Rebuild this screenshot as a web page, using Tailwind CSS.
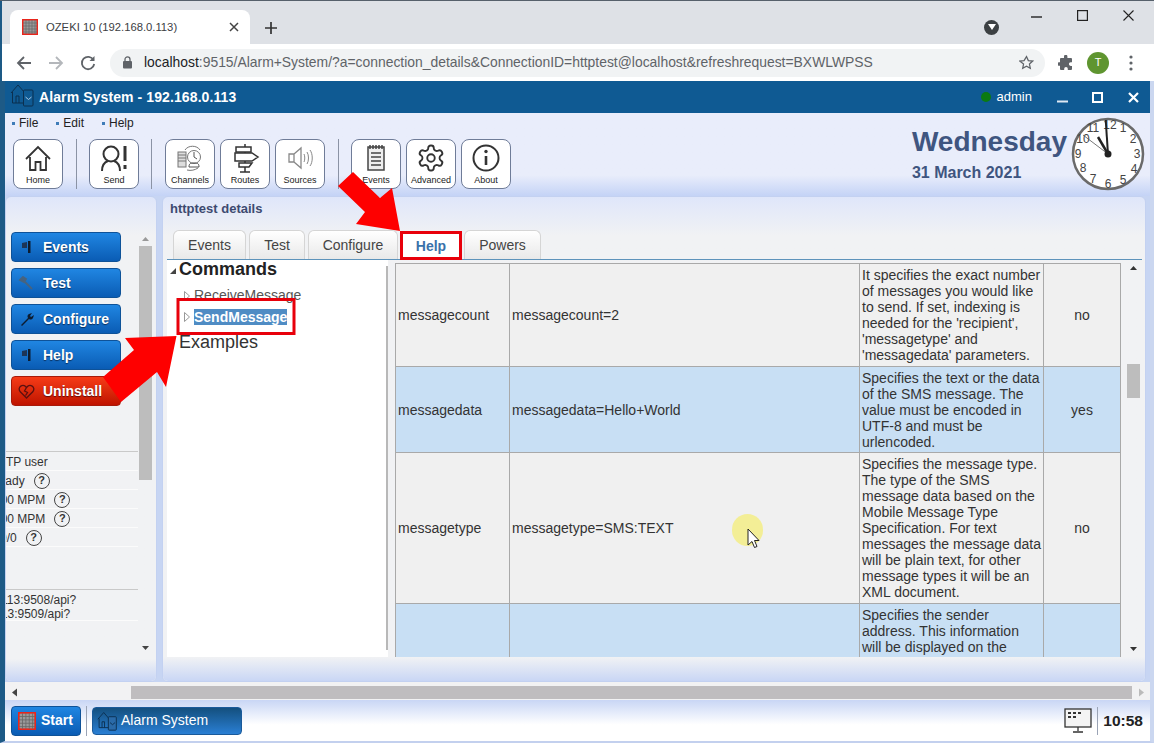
<!DOCTYPE html>
<html lang="en">
<head>
<meta charset="UTF-8">
<title>Alarm System</title>
<script src="https://cdn.jsdelivr.net/npm/@tailwindcss/browser@4"></script>
</head>
<body class="bg-white">
<div class="relative w-[1154px] h-[743px] overflow-hidden flex flex-col font-['Liberation_Sans',Arial,sans-serif] text-[#333]">

  <!-- browser chrome -->
  <div class="h-[1px] bg-[#56606b] shrink-0"></div>
  <div class="h-[43px] shrink-0 bg-[#dee1e6] border-l-2 border-[#1d5a86] flex items-end pl-[8px] relative">
    <div class="w-[240px] h-[34px] bg-white rounded-t-lg flex items-center pl-[12px] pr-[11px]">
      <svg class="w-[16px] h-[16px] shrink-0" viewBox="0 0 16 16"><rect x="0.75" y="0.75" width="14.5" height="14.5" fill="#9a9a9a" stroke="#e8261c" stroke-width="1.5"/><path d="M4 1v14M7 1v14M10 1v14M13 1v14M1 4h14M1 7h14M1 10h14M1 13h14" stroke="#666" stroke-width="0.7"/></svg>
      <span class="ml-[8px] text-[11.25px] text-[#3c4043] whitespace-nowrap">OZEKI 10 (192.168.0.113)</span>
      <svg class="ml-auto w-[10px] h-[10px]" viewBox="0 0 10 10"><path d="M1 1l8 8M9 1l-8 8" stroke="#444" stroke-width="1.5"/></svg>
    </div>
    <svg class="ml-[15px] mb-[10px] w-[12px] h-[12px]" viewBox="0 0 12 12"><path d="M6 0v12M0 6h12" stroke="#333" stroke-width="1.7"/></svg>
    <div class="ml-auto flex items-center h-full pr-[20px] text-[#222]">
      <div class="w-[15px] h-[15px] rounded-full bg-[#3c4043] flex items-center justify-center mt-[9px] mr-[32px]">
        <svg class="w-[8px] h-[6px]" viewBox="0 0 8 6"><path d="M0 0h8L4 6z" fill="#fff"/></svg>
      </div>
      <svg class="w-[11px] h-[2px] mb-[11px] mr-[35px]" viewBox="0 0 11 2"><path d="M0 1h11" stroke="#222" stroke-width="1.4"/></svg>
      <svg class="w-[11px] h-[11px] mb-[15px] mr-[35px]" viewBox="0 0 11 11"><rect x="0.6" y="0.6" width="9.8" height="9.8" fill="none" stroke="#222" stroke-width="1.2"/></svg>
      <svg class="w-[11px] h-[11px] mb-[15px]" viewBox="0 0 11 11"><path d="M0.5 0.5l10 10M10.5 0.5l-10 10" stroke="#222" stroke-width="1.1"/></svg>
    </div>
  </div>
  <div class="h-[37px] shrink-0 bg-white border-l-2 border-[#1d5a86] flex items-center pl-[14px] pr-[18px]">
    <svg class="w-[16px] h-[16px]" viewBox="0 0 16 16"><path d="M15 8H2M8 2L2 8l6 6" fill="none" stroke="#5f6368" stroke-width="1.8"/></svg>
    <svg class="ml-[16px] w-[16px] h-[16px]" viewBox="0 0 16 16"><path d="M1 8h13M8 2l6 6-6 6" fill="none" stroke="#b4b7bb" stroke-width="1.8"/></svg>
    <svg class="ml-[16px] w-[16px] h-[16px]" viewBox="0 0 16 16"><path d="M13.5 5A6.2 6.2 0 1 0 14.2 9" fill="none" stroke="#5f6368" stroke-width="1.8"/><path d="M14.5 1v5h-5z" fill="#5f6368"/></svg>
    <div class="ml-[14px] w-[935px] h-[28px] rounded-full bg-[#f1f3f4] flex items-center pl-[12px] pr-[11px]">
      <svg class="w-[11px] h-[13px] shrink-0" viewBox="0 0 11 13"><rect x="1" y="5" width="9" height="7.5" rx="1" fill="#5f6368"/><path d="M3 5V3.4a2.5 2.5 0 0 1 5 0V5" fill="none" stroke="#5f6368" stroke-width="1.3"/></svg>
      <span class="ml-[11px] text-[13.9px] text-[#5f6368] whitespace-nowrap"><span class="text-[#202124]">localhost</span>:9515/Alarm+System/?a=connection_details&amp;ConnectionID=httptest@localhost&amp;refreshrequest=BXWLWPSS</span>
      <svg class="ml-auto w-[15px] h-[15px] shrink-0" viewBox="0 0 24 24"><path d="M12 2.5l2.9 6.4 7 .8-5.2 4.7 1.4 6.9-6.1-3.5-6.1 3.5 1.4-6.9L1.100 9.700l7-.8z" fill="none" stroke="#5f6368" stroke-width="2"/></svg>
    </div>
    <svg class="ml-[13px] w-[16px] h-[16px]" viewBox="0 0 16 16"><path d="M6 1.500a1.700 1.700 0 0 1 3.400 0V3H13a1 1 0 0 1 1 1v3.300h-1.300a1.800 1.800 0 0 0 0 3.600H14V14a1 1 0 0 1-1 1H9.800v-1.300a1.800 1.800 0 0 0-3.600 0V15H3a1 1 0 0 1-1-1v-3.200H1a1.800 1.800 0 0 1 0-3.600h1V4a1 1 0 0 1 1-1h3z" fill="#5f6368"/></svg>
    <div class="ml-[13px] w-[22px] h-[22px] rounded-full bg-[#5f9530] text-white text-[11px] flex items-center justify-center">T</div>
    <svg class="ml-[20px] w-[4px] h-[16px]" viewBox="0 0 4 16"><circle cx="2" cy="2" r="1.600" fill="#5f6368"/><circle cx="2" cy="8" r="1.600" fill="#5f6368"/><circle cx="2" cy="14" r="1.600" fill="#5f6368"/></svg>
  </div>

  <!-- app window -->
  <div class="flex-1 min-h-0 flex flex-col border-l-[5px] border-l-[#1d5a86] border-r-[4px] border-r-[#cbd7f0] border-b-2 border-b-[#c3d0ee]">

    <!-- title bar -->
    <div class="h-[32px] shrink-0 bg-[#0f5a93] flex items-center text-white">
      <svg class="ml-[5px] w-[25px] h-[25px] shrink-0 mb-[5px]" viewBox="0 0 25 25" fill="none" stroke="#0b2f4f" stroke-width="1"><path d="M1 11L8 3l7 8M2.500 10v11H14"/><path d="M6 21v-7h3v7"/><rect x="13.500" y="8" width="9.500" height="16" rx="1" fill="#0f5a93"/><path d="M15.500 15l3 2.500 3-2.500" stroke="#a8c6e0"/></svg>
      <span class="ml-[4px] text-[14px] font-bold whitespace-nowrap tracking-[0.1px]">Alarm System - 192.168.0.113</span>
      <span class="ml-auto w-[10px] h-[10px] rounded-full bg-[#0b7a12]"></span>
      <span class="ml-[6px] text-[13px]">admin</span>
      <svg class="ml-[25px] w-[11px] h-[11px]" viewBox="0 0 11 11"><path d="M0 9.500h11" stroke="#dfe9f3" stroke-width="2"/></svg>
      <svg class="ml-[24px] w-[11px] h-[11px]" viewBox="0 0 11 11"><rect x="1" y="1" width="9" height="9" fill="none" stroke="#fff" stroke-width="2"/></svg>
      <svg class="ml-[25px] mr-[11px] w-[11px] h-[11px]" viewBox="0 0 11 11"><path d="M1 1l9 9M10 1l-9 9" stroke="#fff" stroke-width="2.200"/></svg>
    </div>

    <!-- menu and toolbar -->
    <div class="h-[83px] shrink-0 bg-gradient-to-b from-[#e9edfb] from-75% to-[#c4d3f6] flex justify-between">
      <div class="flex flex-col">
        <div class="h-[20px] flex items-center text-[12px] text-[#222] pl-[7px]">
          <span class="w-[3px] h-[3px] bg-[#3f7cb8]"></span><span class="ml-[4px]">File</span>
          <span class="ml-[18px] w-[3px] h-[3px] bg-[#3f7cb8]"></span><span class="ml-[4px]">Edit</span>
          <span class="ml-[18px] w-[3px] h-[3px] bg-[#3f7cb8]"></span><span class="ml-[4px]">Help</span>
        </div>
        <div class="mt-[6px] pl-[8px] flex items-center">
          <div class="w-[50px] h-[50px] bg-white border border-[#6f7c98] rounded-lg flex flex-col items-center justify-between pt-[3px] pb-[1px] text-[9px] text-[#222]">
            <svg class="w-[30px] h-[30px]" viewBox="0 0 30 30" fill="none" stroke="#333" stroke-width="1.800"><path d="M3 16L15 4l12 12M7 14v13h5.500v-8h5v8H23V14"/></svg>Home</div>
          <div class="ml-[13px] w-px h-[50px] bg-[#8b93a5]"></div>
          <div class="ml-[12px] w-[50px] h-[50px] bg-white border border-[#6f7c98] rounded-lg flex flex-col items-center justify-between pt-[3px] pb-[1px] text-[9px] text-[#222]">
            <svg class="w-[30px] h-[30px]" viewBox="0 0 30 30" fill="none" stroke="#333" stroke-width="2"><circle cx="12" cy="11" r="7.500"/><path d="M3 28c0-6 3-9 6-10M21 28c0-6-3-9-6-10"/><path d="M26 3v15M26 22v4" stroke-width="3"/></svg>Send</div>
          <div class="ml-[12px] w-px h-[50px] bg-[#8b93a5]"></div>
          <div class="ml-[13px] w-[50px] h-[50px] bg-white border border-[#6f7c98] rounded-lg flex flex-col items-center justify-between pt-[3px] pb-[1px] text-[9px] text-[#222]">
            <svg class="w-[30px] h-[30px]" viewBox="0 0 30 30" fill="none" stroke="#777" stroke-width="1"><rect x="3" y="9" width="8" height="15" fill="#ddd"/><path d="M3 12h8M3 15h8M3 18h8"/><path d="M10 7c3-5 12-5 15 0M12 27c4 1 8 0 11-2"/><circle cx="19" cy="14" r="6.500" fill="#fff"/><path d="M19 9v5l3 2M14 24c0-4 2-4 5-4s5 0 5 4z" stroke="#555"/></svg>Channels</div>
          <div class="ml-[5px] w-[50px] h-[50px] bg-white border border-[#6f7c98] rounded-lg flex flex-col items-center justify-between pt-[3px] pb-[1px] text-[9px] text-[#222]">
            <svg class="w-[30px] h-[30px]" viewBox="0 0 30 30" fill="none" stroke="#333" stroke-width="1.500"><path d="M15 1v28M10 29h10"/><rect x="6" y="4" width="15" height="5" fill="#fff"/><path d="M5 10h17l6 4-6 4H5z" fill="#fff"/><path d="M9 19H22l-3 4H9z" fill="#fff" transform="translate(0 1)"/></svg>Routes</div>
          <div class="ml-[5px] w-[50px] h-[50px] bg-white border border-[#6f7c98] rounded-lg flex flex-col items-center justify-between pt-[3px] pb-[1px] text-[9px] text-[#222]">
            <svg class="w-[30px] h-[30px]" viewBox="0 0 30 30" fill="none" stroke="#888" stroke-width="1.300"><path d="M4 11h5v8H4zM9 11l7-6v20l-7-6"/><path d="M19 11c1 2 1 6 0 8M22 9c2 3 2 9 0 12M25 7c3 4 3 12 0 16" stroke-width="1"/></svg>Sources</div>
          <div class="ml-[13px] w-px h-[50px] bg-[#8b93a5]"></div>
          <div class="ml-[12px] w-[50px] h-[50px] bg-white border border-[#6f7c98] rounded-lg flex flex-col items-center justify-between pt-[3px] pb-[1px] text-[9px] text-[#222]">
            <svg class="w-[30px] h-[30px]" viewBox="0 0 30 30" fill="none" stroke="#444" stroke-width="1.500"><rect x="7" y="4" width="16" height="23" fill="#eee"/><path d="M9 2v4M12 2v4M15 2v4M18 2v4M21 2v4M10 10h10M10 14h10M10 18h10M10 22h10"/></svg>Events</div>
          <div class="ml-[5px] w-[50px] h-[50px] bg-white border border-[#6f7c98] rounded-lg flex flex-col items-center justify-between pt-[3px] pb-[1px] text-[9px] text-[#222]">
            <svg class="w-[30px] h-[30px]" viewBox="0 0 24 24" fill="none" stroke="#333" stroke-width="1.500"><path d="M12.220 2h-.44a2 2 0 0 0-2 2v.18a2 2 0 0 1-1 1.730l-.43.25a2 2 0 0 1-2 0l-.15-.08a2 2 0 0 0-2.730.73l-.22.38a2 2 0 0 0 .73 2.730l.15.1a2 2 0 0 1 1 1.720v.51a2 2 0 0 1-1 1.740l-.15.09a2 2 0 0 0-.73 2.730l.22.38a2 2 0 0 0 2.730.73l.15-.08a2 2 0 0 1 2 0l.43.25a2 2 0 0 1 1 1.730V20a2 2 0 0 0 2 2h.44a2 2 0 0 0 2-2v-.18a2 2 0 0 1 1-1.730l.43-.25a2 2 0 0 1 2 0l.15.08a2 2 0 0 0 2.730-.73l.22-.39a2 2 0 0 0-.73-2.730l-.15-.08a2 2 0 0 1-1-1.740v-.5a2 2 0 0 1 1-1.740l.15-.09a2 2 0 0 0 .73-2.730l-.22-.38a2 2 0 0 0-2.730-.73l-.15.08a2 2 0 0 1-2 0l-.43-.25a2 2 0 0 1-1-1.730V4a2 2 0 0 0-2-2z"/><circle cx="12" cy="12" r="3"/></svg>Advanced</div>
          <div class="ml-[5px] w-[50px] h-[50px] bg-white border border-[#6f7c98] rounded-lg flex flex-col items-center justify-between pt-[3px] pb-[1px] text-[9px] text-[#222]">
            <svg class="w-[30px] h-[30px]" viewBox="0 0 30 30" fill="none" stroke="#333" stroke-width="2"><circle cx="15" cy="15" r="12.500"/><path d="M15 13v9" stroke-width="2.600"/><circle cx="15" cy="8.500" r="1.700" fill="#333" stroke="none"/></svg>About</div>
        </div>
      </div>
      <div class="flex items-start pr-[5px]">
        <div class="pt-[13px] mr-[4px] text-[#3f5580] font-bold">
          <div class="text-[28px] leading-[32px]">Wednesday</div>
          <div class="text-[16px] leading-[18px] mt-[6px]">31 March 2021</div>
        </div>
        <svg class="w-[74px] h-[74px] mt-[4px]" viewBox="0 0 74 74">
          <circle cx="37" cy="37" r="35" fill="#fff" stroke="#6a6a6a" stroke-width="2.500"/>
          <g font-size="12" font-family="Liberation Sans" fill="#444" text-anchor="middle">
            <text x="39" y="12">12</text><text x="52" y="15">1</text><text x="62" y="26">2</text><text x="66" y="41">3</text><text x="63" y="56">4</text><text x="52" y="67">5</text><text x="37" y="71">6</text><text x="22" y="66">7</text><text x="12" y="55">8</text><text x="7" y="41">9</text><text x="12" y="26">10</text><text x="22" y="15">11</text>
          </g>
          <path d="M37 37L34.700 3" stroke="#222" stroke-width="2"/><path d="M37 37L27 20" stroke="#222" stroke-width="2.500"/><path d="M37 37L12 18" stroke="#555" stroke-width="0.800"/>
          <circle cx="37" cy="37" r="3.500" fill="#222"/>
        </svg>
      </div>
    </div>

    <!-- panels -->
    <div class="h-[486px] shrink-0 flex gap-[5px] bg-[#c7d5f3]">
      <!-- left panel -->
      <div class="w-[152px] shrink-0 rounded-md border border-[#c3d1f1] bg-gradient-to-b from-[#dfe6fa] via-[#f1f2f4] via-8% to-[#f1f2f4] flex overflow-hidden relative">
        <div class="w-[132px] shrink-0 overflow-hidden">
          <div class="pt-[35px] pl-[5px] flex flex-col gap-[6px] w-[115px]">
            <div class="h-[30px] rounded bg-gradient-to-b from-[#2086e2] to-[#0a5cb4] border border-[#0e5298] flex items-center text-[14px] font-bold text-white [text-shadow:0_1px_1px_#0a2f5c]">
              <svg class="ml-[9px] w-[12px] h-[14px]" viewBox="0 0 12 14"><path d="M1 3l5-1V8H1z" fill="#1d3557"/><path d="M7 1h2.500v12H7z" fill="#0d1c30"/></svg><span class="ml-[10px]">Events</span></div>
            <div class="h-[30px] rounded bg-gradient-to-b from-[#2086e2] to-[#0a5cb4] border border-[#0e5298] flex items-center text-[14px] font-bold text-white [text-shadow:0_1px_1px_#0a2f5c]">
              <svg class="ml-[6px] w-[16px] h-[14px]" viewBox="0 0 16 14"><path d="M2 4l3-3 3 2-2 3zM6 5l8 8" fill="#47637f" stroke="#47637f" stroke-width="1.800"/></svg><span class="ml-[9px]">Test</span></div>
            <div class="h-[30px] rounded bg-gradient-to-b from-[#2086e2] to-[#0a5cb4] border border-[#0e5298] flex items-center text-[14px] font-bold text-white [text-shadow:0_1px_1px_#0a2f5c]">
              <svg class="ml-[8px] w-[14px] h-[14px]" viewBox="0 0 14 14"><path d="M1 13l7-7a3 3 0 0 1 1-4l3-1-2 3 1 1 3-2-1 3a3 3 0 0 1-4 1l-7 7z" fill="#0d1c30"/></svg><span class="ml-[9px]">Configure</span></div>
            <div class="h-[30px] rounded bg-gradient-to-b from-[#2086e2] to-[#0a5cb4] border border-[#0e5298] flex items-center text-[14px] font-bold text-white [text-shadow:0_1px_1px_#0a2f5c]">
              <svg class="ml-[9px] w-[12px] h-[14px]" viewBox="0 0 12 14"><path d="M1 3l5-1V8H1z" fill="#1d3557"/><path d="M7 1h2.500v12H7z" fill="#0d1c30"/></svg><span class="ml-[10px]">Help</span></div>
            <div class="h-[30px] rounded bg-gradient-to-b from-[#f63b17] to-[#bf1200] border border-[#a81a0a] flex items-center text-[14px] font-bold text-white [text-shadow:0_1px_1px_#5c0a0a]">
              <svg class="ml-[6px] w-[17px] h-[15px]" viewBox="0 0 17 15" fill="none" stroke="#5b1010" stroke-width="1.300"><path d="M8.500 14L2 7.500C-1 3 5 -1 8.500 3.500C12 -1 18 3 15 7.500zM8.500 3.500L6.500 7l3 1.500-2 3"/></svg><span class="ml-[8px]">Uninstall</span></div>
          </div>
          <div class="mt-[45px] border-t border-[#c9c9c9] text-[12px] text-[#333] whitespace-nowrap">
            <div class="h-[19px] pt-[1px] flex items-center border-b border-[#fbfbfb] -ml-[16px]">HTTP user</div>
            <div class="h-[19px] pt-[1px] flex items-center border-b border-[#fbfbfb] -ml-[16px]">Ready<span class="ml-[9px] w-[16px] h-[16px] rounded-full border-[1.500px] border-[#444] text-[11px] font-bold flex items-center justify-center">?</span></div>
            <div class="h-[19px] pt-[1px] flex items-center border-b border-[#fbfbfb] -ml-[12px]">100 MPM<span class="ml-[9px] w-[16px] h-[16px] rounded-full border-[1.500px] border-[#444] text-[11px] font-bold flex items-center justify-center">?</span></div>
            <div class="h-[19px] pt-[1px] flex items-center border-b border-[#fbfbfb] -ml-[12px]">100 MPM<span class="ml-[9px] w-[16px] h-[16px] rounded-full border-[1.500px] border-[#444] text-[11px] font-bold flex items-center justify-center">?</span></div>
            <div class="h-[19px] pt-[1px] flex items-center border-b border-[#fbfbfb] -ml-[6px]">0/0<span class="ml-[9px] w-[16px] h-[16px] rounded-full border-[1.500px] border-[#444] text-[11px] font-bold flex items-center justify-center">?</span></div>
          </div>
          <div class="mt-[42px] border-t border-[#c9c9c9] border-b-0 text-[12px] leading-[14px] text-[#333] whitespace-nowrap">
            <div class="h-[31px] border-b border-[#fbfbfb] pt-[3px]">
              <div class="-ml-[5px]">113:9508/api?</div>
              <div class="-ml-[11px]">113:9509/api?</div>
            </div>
          </div>
        </div>
        <div class="ml-[1px] w-[13px] shrink-0 flex flex-col items-center pt-[35px] pb-[28px]">
          <svg class="w-[13px] h-[14px] shrink-0" viewBox="0 0 13 14"><path d="M3 9h7L6.500 5z" fill="#999"/></svg>
          <div class="w-[13px] h-[234px] bg-[#bdbdbd] shrink-0"></div>
          <svg class="mt-auto w-[13px] h-[10px] shrink-0" viewBox="0 0 13 10"><path d="M3 3h7L6.500 7z" fill="#444"/></svg>
        </div>
        <div class="absolute left-0 right-0 bottom-0 h-[22px] bg-gradient-to-b from-[#f1f2f4] to-[#c9d6f5]"></div>
      </div>

      <!-- right panel -->
      <div class="w-[984px] shrink-0 rounded-md border border-[#c3d1f1] bg-gradient-to-b from-[#dfe6fa] via-[#f1f2f4] via-8% to-[#f1f2f4] flex flex-col overflow-hidden">
        <div class="h-[33px] shrink-0 pl-[7px] pt-[4px] text-[13px] font-bold text-[#3d4a70] leading-[15px]">httptest details</div>
        <div class="h-[30px] shrink-0 ml-[4px] mr-[3px] flex items-end gap-[3px] border-b-[1.500px] border-[#5d93bb] text-[14px] text-[#444]">
          <div class="ml-[6px] w-[73px] h-[29px] rounded-t-md border border-b-0 border-[#d5d5d5] bg-gradient-to-b from-white to-[#e9e9e9] flex items-center justify-center">Events</div>
          <div class="w-[56px] h-[29px] rounded-t-md border border-b-0 border-[#d5d5d5] bg-gradient-to-b from-white to-[#e9e9e9] flex items-center justify-center">Test</div>
          <div class="w-[90px] h-[29px] rounded-t-md border border-b-0 border-[#d5d5d5] bg-gradient-to-b from-white to-[#e9e9e9] flex items-center justify-center">Configure</div>
          <div class="ml-[1px] w-[58px] h-[27px] bg-white flex items-center justify-center font-bold text-[#3a72aa] -mb-px">Help</div>
          <div class="ml-[1px] w-[77px] h-[29px] rounded-t-md border border-b-0 border-[#d5d5d5] bg-gradient-to-b from-white to-[#e9e9e9] flex items-center justify-center">Powers</div>
        </div>
        <div class="h-[397px] shrink-0 flex ml-[4px]">
          <!-- tree -->
          <div class="w-[221px] shrink-0 bg-white relative">
            <div class="flex items-center h-[19px] text-[18px] font-bold text-[#222]">
              <svg class="ml-[3px] w-[6px] h-[6px] mt-[2px]" viewBox="0 0 7 7"><path d="M0 7h7V0z" fill="#444"/></svg><span class="ml-[3px]">Commands</span>
            </div>
            <div class="mt-[6px] flex items-center h-[21px] text-[14px] text-[#555]">
              <svg class="ml-[17px] w-[6px] h-[10px]" viewBox="0 0 6 10"><path d="M.5.500l5 4.500-5 4.500z" fill="#fff" stroke="#999"/></svg><span class="ml-[4px]">ReceiveMessage</span>
            </div>
            <div class="flex items-center h-[22px] text-[14px]">
              <svg class="ml-[17px] w-[6px] h-[10px]" viewBox="0 0 6 10"><path d="M.5.500l5 4.500-5 4.500z" fill="#fff" stroke="#999"/></svg><span class="ml-[4px] bg-[#4f8cc4] text-white font-bold leading-[16px]">SendMessage</span>
            </div>
            <div class="mt-[3px] ml-[12px] text-[18px] leading-[22px] text-[#333]">Examples</div>
            <div class="absolute right-0 top-[6px] bottom-[7px] w-[2px] bg-[#b8b8b8]"></div>
          </div>
          <!-- parameters table -->
          <div class="ml-[7px] w-[726px] shrink-0 pt-[3px] overflow-hidden">
            <table class="table-fixed w-[725px] border-collapse text-[14px] leading-[16px] text-[#333]">
              <colgroup><col class="w-[114px]"><col class="w-[350px]"><col class="w-[184px]"><col class="w-[77px]"></colgroup>
              <tbody>
                <tr class="bg-[#f0f0f0]">
                  <td class="border border-[#a9a9a9] px-[2px] py-[3px]">messagecount</td>
                  <td class="border border-[#a9a9a9] px-[2px] py-[3px]">messagecount=2</td>
                  <td class="border border-[#a9a9a9] px-[2px] py-[3px] whitespace-nowrap">It specifies the exact number<br>of messages you would like<br>to send. If set, indexing is<br>needed for the 'recipient',<br>'messagetype' and<br>'messagedata' parameters.</td>
                  <td class="border border-[#a9a9a9] px-[2px] py-[3px] text-center">no</td>
                </tr>
                <tr class="bg-[#c8dff4]">
                  <td class="border border-[#a9a9a9] px-[2px] py-[3px]">messagedata</td>
                  <td class="border border-[#a9a9a9] px-[2px] py-[3px]">messagedata=Hello+World</td>
                  <td class="border border-[#a9a9a9] px-[2px] pt-[3px] pb-[2px] whitespace-nowrap">Specifies the text or the data<br>of the SMS message. The<br>value must be encoded in<br>UTF-8 and must be<br>urlencoded.</td>
                  <td class="border border-[#a9a9a9] px-[2px] py-[3px] text-center">yes</td>
                </tr>
                <tr class="bg-[#f0f0f0]">
                  <td class="border border-[#a9a9a9] px-[2px] py-[3px]">messagetype</td>
                  <td class="border border-[#a9a9a9] px-[2px] py-[3px]">messagetype=SMS:TEXT</td>
                  <td class="border border-[#a9a9a9] px-[2px] py-[3px] whitespace-nowrap">Specifies the message type.<br>The type of the SMS<br>message data based on the<br>Mobile Message Type<br>Specification. For text<br>messages the message data<br>will be plain text, for other<br>message types it will be an<br>XML document.</td>
                  <td class="border border-[#a9a9a9] px-[2px] py-[3px] text-center">no</td>
                </tr>
                <tr class="bg-[#c8dff4]">
                  <td class="border border-[#a9a9a9] px-[2px] py-[3px]"></td>
                  <td class="border border-[#a9a9a9] px-[2px] py-[3px]"></td>
                  <td class="border border-[#a9a9a9] px-[2px] py-[3px] whitespace-nowrap">Specifies the sender<br>address. This information<br>will be displayed on the</td>
                  <td class="border border-[#a9a9a9] px-[2px] py-[3px]"></td>
                </tr>
              </tbody>
            </table>
          </div>
          <!-- table scrollbar -->
          <div class="ml-[5px] w-[15px] shrink-0 flex flex-col items-center pt-[3px] pb-[3px]">
            <svg class="w-[13px] h-[10px] shrink-0" viewBox="0 0 13 10"><path d="M3 7h7L6.500 3z" fill="#333"/></svg>
            <div class="mt-[91px] w-[13px] h-[34px] bg-[#bdbdbd] shrink-0"></div>
            <svg class="mt-auto w-[13px] h-[10px] shrink-0" viewBox="0 0 13 10"><path d="M3 3h7L6.500 7z" fill="#333"/></svg>
          </div>
        </div>
        <div class="flex-1 bg-gradient-to-b from-[#f1f2f4] to-[#c9d6f5]"></div>
      </div>
    </div>

    <!-- horizontal scrollbar -->
    <div class="h-[18px] shrink-0 bg-[#f2f2f3] pt-[3px] flex items-center">
      <svg class="ml-[5px] w-[10px] h-[13px] shrink-0" viewBox="0 0 10 13"><path d="M7 2.500v8L2 6.500z" fill="#444"/></svg>
      <div class="ml-[111px] w-[1001px] h-[13px] bg-[#bfbdbf]"></div>
      <svg class="ml-[4px] w-[10px] h-[13px] shrink-0" viewBox="0 0 10 13"><path d="M3 2.500v8L8 6.500z" fill="#bbb"/></svg>
    </div>

    <!-- taskbar -->
    <div class="flex-1 bg-gradient-to-b from-[#c9d6f5] to-white to-60% flex items-center">
      <div class="ml-[6px] w-[70px] h-[30px] rounded bg-gradient-to-b from-[#2086e2] to-[#0a5cb4] border border-[#0e5298] flex items-center text-[14px] font-bold text-white">
        <svg class="ml-[6px] w-[18px] h-[18px]" viewBox="0 0 16 16"><rect x="0.750" y="0.750" width="14.500" height="14.500" fill="#9a9a9a" stroke="#e8261c" stroke-width="1.500"/><path d="M4 1v14M7 1v14M10 1v14M13 1v14M1 4h14M1 7h14M1 10h14M1 13h14" stroke="#666" stroke-width="0.700"/></svg><span class="ml-[5px]">Start</span>
      </div>
      <div class="ml-[5px] w-px h-[30px] bg-[#9aa3b5]"></div>
      <div class="ml-[5px] w-[150px] h-[28px] rounded bg-gradient-to-b from-[#14507f] to-[#2a7fd4] border border-[#1a5a9a] flex items-center text-[14px] text-white">
        <svg class="ml-[4px] w-[21px] h-[21px]" viewBox="0 0 25 25" fill="none" stroke="#0b2f4f" stroke-width="1.100"><path d="M1 11L8 3l7 8M2.500 10v11H14"/><path d="M6 21v-7h3v7"/><rect x="13.500" y="8" width="9.500" height="16" rx="1" fill="#2a6aa8"/><path d="M15.500 15l3 2.500 3-2.500"/></svg><span class="ml-[3px]">Alarm System</span>
      </div>
      <svg class="ml-auto w-[28px] h-[25px]" viewBox="0 0 28 25" fill="none" stroke="#333" stroke-width="1.300"><rect x="1" y="1" width="26" height="18" fill="#f4f4f4"/><path d="M4 4h3v2H4zM9 4h3v2H9zM14 4h3v2h-3zM4 8h3v2H4zM9 8h3v2H9z" fill="#333" stroke="none"/><path d="M14 19v4M9 24h10"/></svg>
      <div class="ml-[5px] w-px h-[28px] bg-[#9aa3b5]"></div>
      <span class="ml-[5px] mr-[7px] text-[15.5px] font-bold text-[#222]">10:58</span>
    </div>
  </div>

  <!-- annotations over the screenshot -->
  <div class="absolute left-[732px] top-[514px] w-[31px] h-[32px] rounded-full bg-[#f3ee96]"></div>
  <svg class="absolute left-[747px] top-[528px] w-[13px] h-[21px]" viewBox="0 0 13 21"><path d="M1 1v16l4-3.500 2.500 6 2.500-1-2.500-6H12z" fill="#fff" stroke="#222" stroke-width="1"/></svg>
  <svg class="absolute left-0 top-0 w-[1154px] h-[743px] pointer-events-none" viewBox="0 0 1154 743">
    <path d="M400 231L392 188L380 198L353 172L338 186L365 212L356 224Z" fill="#fe0000"/>
    <path d="M176.500 336L125 338L134 350L103 377L121 402L157 372L166 387Z" fill="#fe0000"/>
    <rect x="401.500" y="232.500" width="59" height="26" fill="none" stroke="#e8000b" stroke-width="3"/>
    <rect x="178" y="299.500" width="116" height="34" fill="none" stroke="#e8000b" stroke-width="3"/>
  </svg>
</div>
</body>
</html>
